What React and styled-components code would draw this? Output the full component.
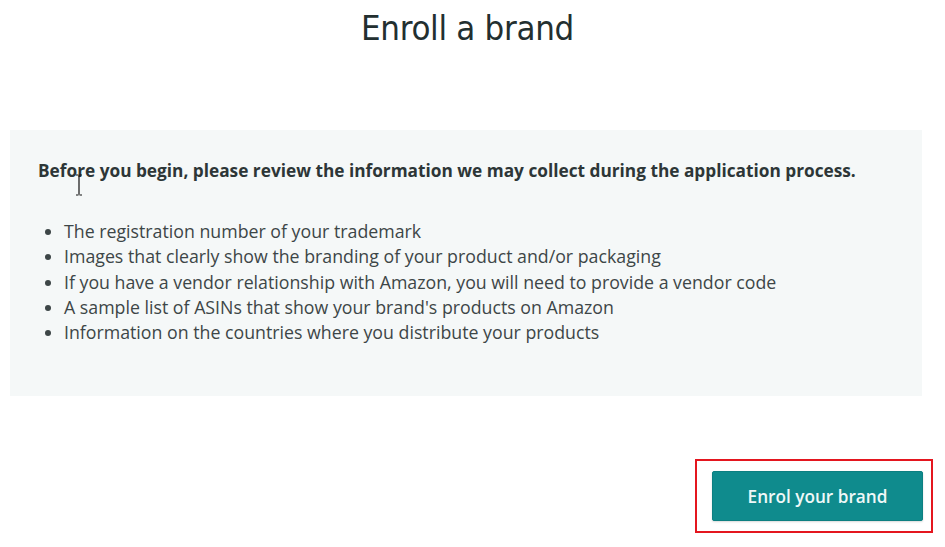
import React from 'react'
import styled, { createGlobalStyle } from 'styled-components'

const Global = createGlobalStyle`
  html, body {
    margin: 0;
    padding: 0;
    background: #fff;
  }
  body {
    font-family: "Open Sans", "Noto Sans", sans-serif;
    color: #333e40;
  }
`

const Page = styled.div`
  width: 945px;
  height: 547px;
  display: flex;
  flex-direction: column;
  position: relative;
  overflow: hidden;
`

const Title = styled.h1`
  margin: 8px 10px 0 0;
  text-align: center;
  font-family: "DejaVu Sans Condensed", "Open Sans", sans-serif;
  font-weight: 400;
  font-size: 34.5px;
  line-height: 41px;
  color: #232f30;
  letter-spacing: -0.3px;
`

const Panel = styled.section`
  margin: 81px 23px 0 10px;
  height: 266px;
  box-sizing: border-box;
  background: #f5f8f8;
  padding: 29px 20px 0 28px;
`

const Lead = styled.p`
  margin: 0 0 36px;
  font-size: 17.25px;
  font-weight: 700;
  line-height: 24px;
  color: #2d3637;
  white-space: nowrap;
`

const List = styled.ul`
  margin: 0;
  padding-left: 26px;
  font-size: 17.75px;
  line-height: 25.3px;
  color: #3d4647;
`

const Item = styled.li`
  padding-left: 0;
`

const Footer = styled.div`
  display: flex;
  justify-content: flex-end;
  padding: 63px 12px 0 0;
`

const Highlight = styled.div`
  border: 2px solid #e4161f;
  padding: 10px 8px 10px 15px;
`

const EnrolButton = styled.button`
  width: 211px;
  height: 50px;
  background: #0f8b8d;
  border: 1px solid #0c7f81;
  border-radius: 2px;
  color: #eef8f8;
  font-family: "Open Sans", sans-serif;
  font-size: 17.2px;
  font-weight: 600;
  cursor: pointer;
  box-shadow: 0 1px 2px rgba(0, 0, 0, 0.15);
`

const Caret = styled.svg`
  position: absolute;
  left: 74px;
  top: 174px;
`

const items = [
  'The registration number of your trademark',
  'Images that clearly show the branding of your product and/or packaging',
  'If you have a vendor relationship with Amazon, you will need to provide a vendor code',
  "A sample list of ASINs that show your brand's products on Amazon",
  'Information on the countries where you distribute your products',
]

export default function App() {
  return (
    <Page>
      <Global />
      <Title>Enroll a brand</Title>
      <Panel>
        <Lead>Before you begin, please review the information we may collect during the application process.</Lead>
        <List>
          {items.map((t) => (
            <Item key={t}>{t}</Item>
          ))}
        </List>
      </Panel>
      <Footer>
        <Highlight>
          <EnrolButton>Enrol your brand</EnrolButton>
        </Highlight>
      </Footer>
      <Caret width="10" height="22" viewBox="0 0 10 22">
        <path d="M2 1h2.5M5.5 1H8M5 1.5v19M2 21h2.5M5.5 21H8" stroke="#111" strokeWidth="1.2" fill="none" />
      </Caret>
    </Page>
  )
}
